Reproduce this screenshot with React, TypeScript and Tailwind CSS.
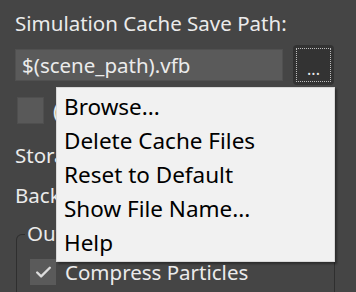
import { Check } from "lucide-react";

const menuItems = ["Browse...", "Delete Cache Files", "Reset to Default", "Show File Name...", "Help"];

export default function App() {
  return (
    <div className="relative h-[292px] w-[356px] overflow-hidden bg-[#454545] font-['Noto_Sans',sans-serif] text-[#ebebeb]">
      <div className="flex flex-col px-[15px] pt-[9px]">
        <div className="text-[20.5px] leading-[28px]">Simulation Cache Save Path:</div>

        <div className="mt-[8px] flex items-center gap-[10px]">
          <div className="flex h-[32px] w-[268px] items-center border border-[#505050] bg-[#5a5a5a] px-[6px] text-[20.5px]">
            $(scene_path).vfb
          </div>
          <div className="flex h-[40px] w-[41px] items-center justify-center rounded-[4px] bg-[#333333] p-[3px]">
            <div className="flex h-full w-full items-end justify-center border border-dotted border-[#bdbdbd] pb-[4px] text-[16px] leading-none">
              ...
            </div>
          </div>
        </div>

        <div className="mt-[10px] flex items-center gap-[9px] pl-[2px]">
          <div className="h-[27px] w-[27px] border border-[#4f4f4f] bg-[#595959]" />
          <span className="text-[20.5px]">(Cache in memory)</span>
        </div>

        <div className="mt-[15px] text-[20.5px] leading-[28px]">Storage Type:</div>
        <div className="mt-[12px] text-[20.5px] leading-[28px]">Backup Cache:</div>

        <div className="relative mt-[25px] ml-[1px] h-[80px] w-[319px] rounded-tl-[6px] border-l border-t border-r border-[#2f2f2f] pl-[13px] pt-[22px]">
          <span className="absolute -top-[16px] left-[8px] bg-[#454545] px-[2px] text-[20.5px] leading-[28px]">Output</span>
          <div className="flex items-center gap-[9px]">
            <div className="flex h-[26px] w-[26px] items-center justify-center bg-[#5a5a5a]">
              <Check size={19} strokeWidth={3} className="text-[#dcdcdc]" />
            </div>
            <span className="text-[20.5px]">Compress Particles</span>
          </div>
        </div>
      </div>

      <div className="absolute left-[56px] top-[87px] flex h-[175px] w-[279px] flex-col justify-center border border-[#d8d8d8] bg-[#f1f1f1] py-[2px] pl-[7px] text-[22.5px] text-black shadow-[2px_2px_2px_rgba(0,0,0,0.35)]">
        {menuItems.map((item) => (
          <div key={item} className="h-[34px] leading-[34px]">
            {item}
          </div>
        ))}
      </div>
    </div>
  );
}
